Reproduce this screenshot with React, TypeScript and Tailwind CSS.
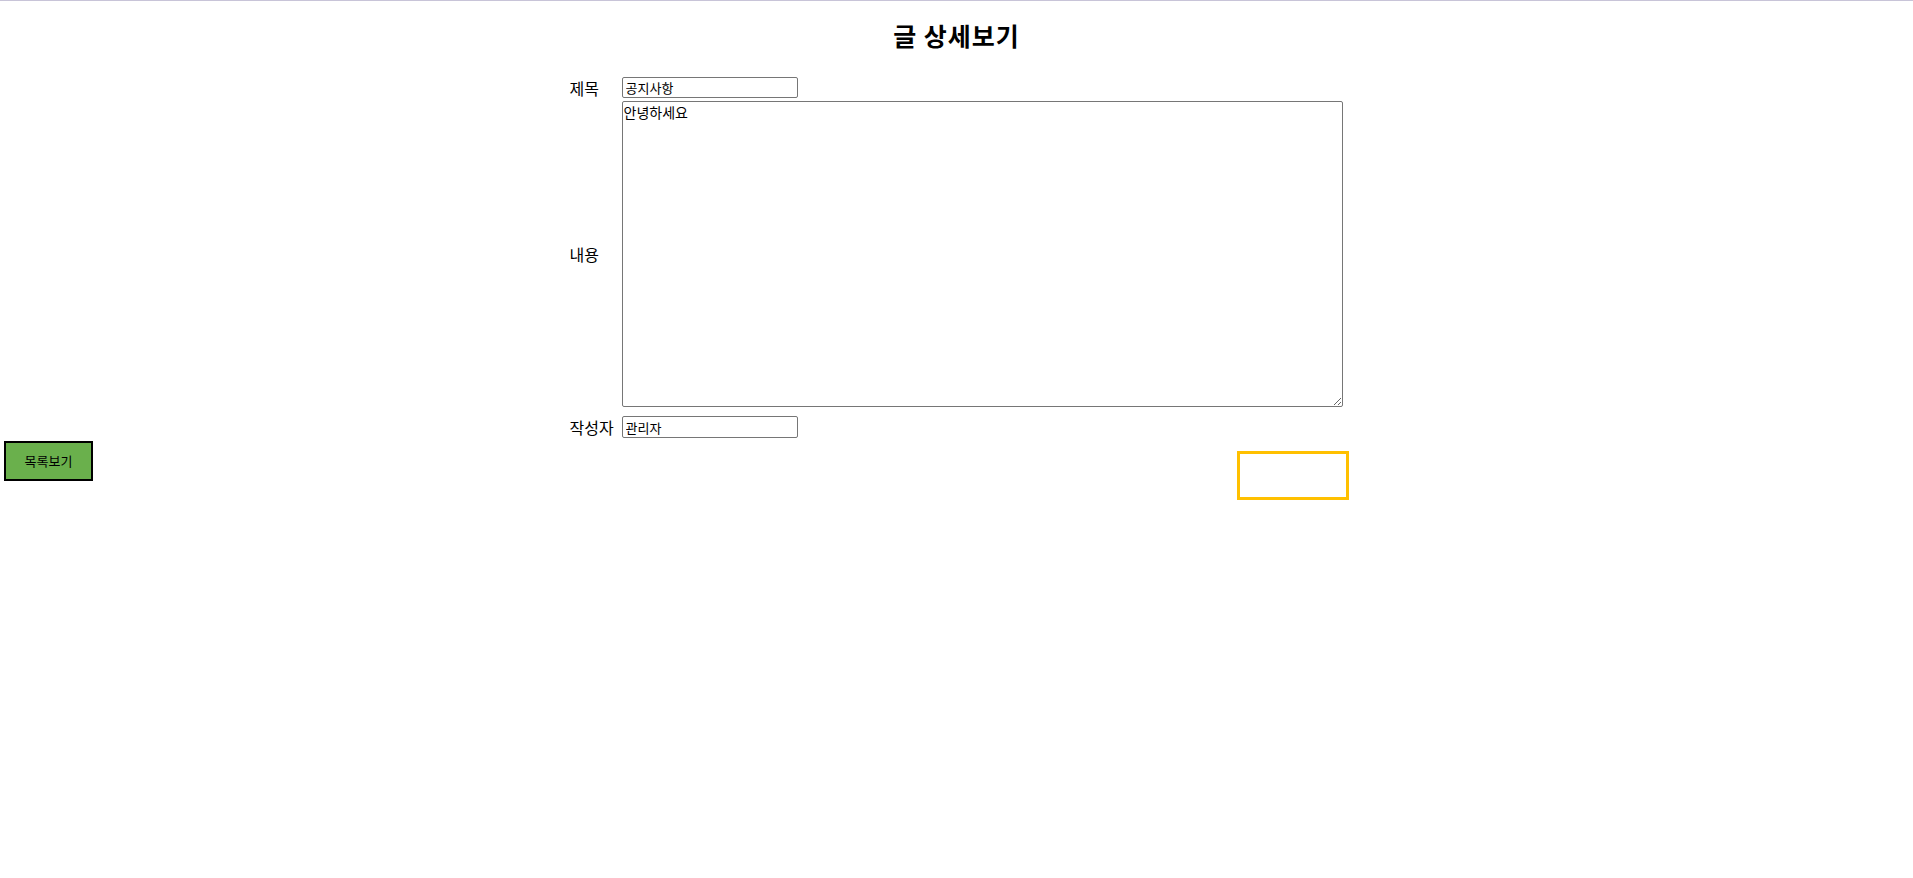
const KR = '"Noto Sans CJK KR", "Noto Sans", sans-serif';

function Field({ label, children, className }: { label: string; children: React.ReactNode; className?: string }) {
  return (
    <div className={'contents ' + (className ?? '')}>
      <div className="flex items-center pl-[2px] text-[16px] leading-[20px] text-black">{label}</div>
      <div className="flex items-center">{children}</div>
    </div>
  );
}

export default function App() {
  return (
    <div className="min-h-screen bg-white text-black" style={{ fontFamily: KR }}>
      <div className="h-px w-full bg-[#c8c4d8]" />

      <h2 className="mt-[18px] text-center text-[25px] font-bold leading-[32px] tracking-[1px]">글 상세보기</h2>

      <div className="mx-auto mt-[26px] grid w-[778px] grid-cols-[52px_721px] gap-x-[2px]">
        <Field label="제목">
          <input
            readOnly
            defaultValue="공지사항"
            className="h-[21px] w-[176px] rounded-[2px] border border-[#767676] px-[3px] text-[13px] leading-[17px] outline-none"
          />
        </Field>

        <div className="flex items-center pl-[2px] pt-[3px] text-[16px] leading-[20px]">내용</div>
        <div className="pt-[3px]">
          <textarea
            readOnly
            defaultValue="안녕하세요"
            className="block h-[306px] w-[721px] resize rounded-[2px] border border-[#767676] px-[1px] py-[1px] text-[14px] leading-[18px] outline-none"
          />
        </div>

        <div className="mt-[9px] flex items-center pl-[2px] text-[16px] leading-[20px]">작성자</div>
        <div className="mt-[9px] flex items-center">
          <input
            readOnly
            defaultValue="관리자"
            className="h-[22px] w-[176px] rounded-[2px] border border-[#767676] px-[3px] text-[13px] leading-[17px] outline-none"
          />
        </div>
      </div>

      <div className="mt-[3px] flex items-start">
        <button className="ml-[4px] h-[40px] w-[89px] border-2 border-black bg-[#6ab04c] text-[13px] leading-[16px] text-black">
          목록보기
        </button>
        <div className="ml-[1144px] mt-[10px] h-[49px] w-[112px] border-[3px] border-[#ffc000]" />
      </div>
    </div>
  );
}
